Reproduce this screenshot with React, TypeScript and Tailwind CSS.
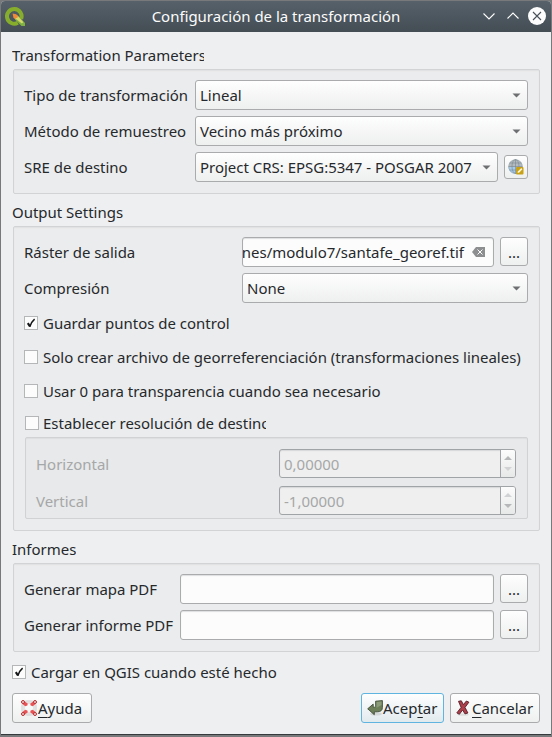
import type { ReactNode } from "react";

function Heading({ children, className }: { children: ReactNode; className: string }) {
  return (
    <div className={`flex items-end ${className}`}>
      <div className="flex h-[27px] items-center overflow-hidden pb-[2px] whitespace-nowrap">{children}</div>
    </div>
  );
}

function Group({ children, className }: { children: ReactNode; className: string }) {
  return (
    <section
      className={`ml-px flex flex-col rounded-[2px] border border-[#d1d3d4] bg-[#ebeced] pt-[10px] pr-[11px] pl-[10px] shadow-[inset_0_1px_1px_#dfe1e2] ${className}`}
    >
      {children}
    </section>
  );
}

function Combo({ value, className }: { value: string; className: string }) {
  return (
    <div
      className={`flex h-[30px] items-center justify-between rounded-[3px] border border-[#a9abac] bg-linear-to-b from-[#fefefe] to-[#eeefef] pr-[6px] pl-[4px] whitespace-nowrap ${className}`}
    >
      <span>{value}</span>
      <svg width="9" height="5" viewBox="0 0 9 5">
        <path d="M.5 .5h8L4.500 4.500z" fill="#6d6f70" />
      </svg>
    </div>
  );
}

function Dots() {
  return (
    <button className="ml-[6px] flex h-[29px] w-[28px] items-center justify-center self-start rounded-[3px] border border-[#a9abac] bg-linear-to-b from-[#fefefe] to-[#eeefef] pt-[1px]">
      ...
    </button>
  );
}

function Check({ label, checked, className = "" }: { label: string; checked?: boolean; className?: string }) {
  return (
    <label className={`flex h-[14px] items-center whitespace-nowrap ${className}`}>
      <span className="mr-[5px] flex h-[14px] w-[14px] shrink-0 items-center justify-center border border-[#b4b6b7] bg-[#fcfcfc]">
        {checked && (
          <svg width="12" height="12" viewBox="0 0 12 12" fill="none" stroke="#141617">
            <path d="M2.8 6.2L5 9.5" strokeWidth="2.2" />
            <path d="M4.8 9.7C5.8 6.5 7.3 4 9.6 2.1" strokeWidth="1.5" />
          </svg>
        )}
      </span>
      <span className="h-[20px] leading-[20px]">{label}</span>
    </label>
  );
}

function Spin({ label, value, atMin }: { label: string; value: string; atMin: boolean }) {
  return (
    <div className="flex h-[29px] items-center text-[#a5a7a8]">
      <span className="w-[243px]">{label}</span>
      <div className="flex h-[29px] w-[237px] overflow-hidden rounded-[3px] border border-[#a1a4a6] bg-[#efefef] shadow-[inset_0_1px_1px_#d6d8d9]">
        <span className="flex flex-1 items-center pl-[4px]">{value}</span>
        <span className="flex w-[15px] flex-col items-center justify-between border-l border-[#a1a4a6] bg-linear-to-b from-[#fcfcfc] to-[#e7e8e8] py-[6px]">
          <svg width="8" height="4" viewBox="0 0 8 4">
            <path d="M0 4h8L4 0z" fill={atMin ? "#b5b7b8" : "#d0d2d3"} />
          </svg>
          <svg width="8" height="4" viewBox="0 0 8 4">
            <path d="M0 0h8L4 4z" fill={atMin ? "#d0d2d3" : "#b5b7b8"} />
          </svg>
        </span>
      </div>
    </div>
  );
}

function Field({ className, children }: { className: string; children?: ReactNode }) {
  return (
    <div
      className={`flex h-[30px] items-center overflow-hidden rounded-[3px] border border-[#a9abac] bg-[#fcfcfc] shadow-[inset_0_1px_1px_#dcdedf] ${className}`}
    >
      {children}
    </div>
  );
}

function QgisLogo() {
  return (
    <svg width="20" height="20" viewBox="0 0 20 20">
      <path
        d="M12.8 15.8A7.3 7.3 0 1 1 16.2 11.8"
        fill="none"
        stroke="#86ad2b"
        strokeWidth="4"
      />
      <path d="M10 9.5h4l6 6.4V19h-3.5L10 12.6z" fill="#7fb241" />
      <path d="M8.5 7.5l4 .9 5.8 6.8-1.4 1.4L9.6 11z" fill="#d7d86b" />
      <path d="M7.6 6.6l3.7.7 2 2.6-3.5 2.2-1.4-1.6z" fill="#f08a38" />
    </svg>
  );
}

function GlobeIcon() {
  return (
    <svg width="16" height="16" viewBox="0 0 16 16">
      <circle cx="7.5" cy="7.5" r="7" fill="#b3bbc0" />
      <path d="M.5 8h14A7 7 0 0 1 .5 8z" fill="#a5cbea" />
      <g fill="none" stroke="#7b878e" strokeWidth=".6">
        <circle cx="7.5" cy="7.5" r="6.8" stroke="#98a4ab" />
        <ellipse cx="7.5" cy="7.5" rx="3.5" ry="7" />
        <path d="M7.5 .5v14M.5 7.5h14M1.5 4h12M1.5 11h12" />
      </g>
      <rect x="8" y="8" width="7.5" height="7.5" rx="1" fill="#c8a117" />
      <path d="M9.5 14l.6-1.8 3.2-3.1 1.1 1.1-3.1 3.2z" fill="#fff8d8" />
    </svg>
  );
}

function HelpIcon() {
  return (
    <svg width="16" height="16" viewBox="0 0 16 16">
      <rect x="2.3" y="2.3" width="11.4" height="11.4" rx="4.5" fill="none" stroke="#e2e2e2" strokeWidth="3.4" />
      <rect x=".8" y=".8" width="14.4" height="14.4" rx="5" fill="none" stroke="#cccece" strokeWidth=".6" />
      <g fill="#ea5254">
        <path d="M1.700 4.200L4.200 1.700 6.800 3.700 6.300 5.600 4.300 6.300z" />
        <path d="M14.300 4.200L11.800 1.700 9.200 3.700l.5 1.900 2 .7z" />
        <path d="M1.700 11.800L4.200 14.300 6.800 12.300l-.5-1.900-2-.7z" />
        <path d="M14.300 11.800L11.800 14.300 9.200 12.300l.5-1.900 2-.7z" />
      </g>
      <g fill="#f6dada" stroke="#b52a2d" strokeWidth="1">
        <circle cx="2" cy="2" r="1.5" />
        <circle cx="14" cy="2" r="1.5" />
        <circle cx="2" cy="14" r="1.5" />
        <circle cx="14" cy="14" r="1.5" />
      </g>
    </svg>
  );
}

function AcceptIcon() {
  return (
    <svg width="16" height="16" viewBox="0 0 16 16">
      <ellipse cx="9" cy="14" rx="6" ry="1.6" fill="#d5d8d8" />
      <path
        d="M8.6 1.2L15.4.6V7.5C15.4 10.5 13.5 11.8 10.2 11.8H7.3V14.7L.7 8.8 6.2 4.1V7.2H7.6C8.5 7.2 8.7 6.8 8.7 6z"
        fill="#6c7f59"
        stroke="#414d36"
        strokeWidth=".9"
      />
      <path d="M9.6 2.1L14.5 1.6V5L9.5 7.7z" fill="#8b9b79" />
    </svg>
  );
}

function CancelIcon() {
  return (
    <svg width="14" height="16" viewBox="0 0 14 16">
      <ellipse cx="7" cy="14.6" rx="6" ry="1.2" fill="#dcdddd" />
      <path
        d="M2.5 1.3L5.3.8 7.4 4.6 10.4 1 12.9 2.2 9 7.4 11.9 13 9 13.9 6.6 10 3.4 14.3.8 12.9 5.1 7.4z"
        fill="#ad3f4b"
        stroke="#561f27"
        strokeWidth=".9"
      />
    </svg>
  );
}

const button =
  "flex h-[30px] items-center rounded-[3px] border bg-linear-to-b from-[#fefefe] whitespace-nowrap";
const key = "underline decoration-1 underline-offset-[3px]";

export default function App() {
  return (
    <div className="h-[737px] w-[552px] overflow-hidden bg-[#77797b] pt-px pr-px pl-px font-['Noto_Sans','Open_Sans',sans-serif] text-[14.98px] leading-[20px] text-[#26292c]">
      <div className="flex h-[734px] flex-col overflow-hidden rounded-t-[4px] border-b border-[#36393b] bg-[#eeeff1]">
        <header className="flex h-[31px] shrink-0 items-center bg-linear-to-b from-[#56616a] to-[#444d54] text-[#fcfcfc]">
          <div className="w-[110px] pl-[4px]">
            <QgisLogo />
          </div>
          <h1 className="flex-1 pb-[2px] text-center whitespace-nowrap">Configuración de la transformación</h1>
          <div className="flex w-[110px] items-center justify-end pr-[5px] pb-px">
            <svg width="64" height="18" viewBox="0 0 64 18" fill="none">
              <path d="M1.5 6.5L7 12l5.5-5.5M25.5 11.5L31 6l5.500 5.500" stroke="#fcfcfc" strokeWidth="1.1" />
              <circle cx="55" cy="9" r="9" fill="#fcfcfc" />
              <path d="M51 5l8 8M59 5l-8 8" stroke="#485159" strokeWidth="1.1" />
            </svg>
          </div>
        </header>

        <main className="flex flex-1 flex-col pr-[11px] pl-[11px]">
          <Heading className="h-[37px] w-[192px]">Transformation Parameters</Heading>
          <Group className="h-[125px] gap-[6px]">
            <div className="flex items-center">
              <span className="w-[171px] whitespace-nowrap">Tipo de transformación</span>
              <Combo value="Lineal" className="flex-1" />
            </div>
            <div className="flex items-center">
              <span className="w-[171px] whitespace-nowrap">Método de remuestreo</span>
              <Combo value="Vecino más próximo" className="flex-1" />
            </div>
            <div className="flex items-center">
              <span className="w-[171px] whitespace-nowrap">SRE de destino</span>
              <Combo value="Project CRS: EPSG:5347 - POSGAR 2007" className="flex-1" />
              <button className="ml-[6px] flex h-[24px] w-[24px] items-center justify-center rounded-[3px] border border-[#a9abac] bg-linear-to-b from-[#fefefe] to-[#eeefef]">
                <GlobeIcon />
              </button>
            </div>
          </Group>

          <Heading className="h-[32px]">Output Settings</Heading>
          <Group className="h-[305px]">
            <div className="flex items-center">
              <span className="w-[218px]">Ráster de salida</span>
              <Field className="w-[252px] justify-end pr-[8px]">
                <span className="whitespace-nowrap">nes/modulo7/santafe_georef.tif</span>
                <svg className="ml-[8px] shrink-0" width="13" height="10" viewBox="0 0 13 10">
                  <path d="M4 0h9v10H4L0 5z" fill="#8c8e8f" />
                  <path d="M5.500 2.500l5 5M10.500 2.500l-5 5" stroke="#fcfcfc" />
                </svg>
              </Field>
              <Dots />
            </div>
            <div className="mt-[6px] flex items-center">
              <span className="w-[218px]">Compresión</span>
              <Combo value="None" className="flex-1" />
            </div>
            <Check className="mt-[13px]" checked label="Guardar puntos de control" />
            <Check className="mt-[20px]" label="Solo crear archivo de georreferenciación (transformaciones lineales)" />
            <Check className="mt-[20px]" label="Usar 0 para transparencia cuando sea necesario" />
            <Check className="mt-[18px] ml-px w-[241px] [&>span:last-child]:overflow-hidden [&>span:first-child]:mr-[4px]" label="Establecer resolución de destino" />
            <div className="mt-[7px] ml-px flex h-[82px] flex-col gap-[8px] rounded-[2px] border border-[#d0d2d3] bg-[#e8e9ea] pt-[11px] pl-[10px] shadow-[inset_0_1px_1px_#dcdedf]">
              <Spin label="Horizontal" value="0,00000" atMin />
              <Spin label="Vertical" value="-1,00000" atMin={false} />
            </div>
          </Group>

          <Heading className="h-[32px]">Informes</Heading>
          <Group className="h-[89px] gap-[6px]">
            <div className="flex items-center">
              <span className="w-[156px] whitespace-nowrap">Generar mapa PDF</span>
              <Field className="flex-1" />
              <Dots />
            </div>
            <div className="flex items-center">
              <span className="w-[156px] whitespace-nowrap">Generar informe PDF</span>
              <Field className="flex-1" />
              <Dots />
            </div>
          </Group>

          <Check className="mt-[13px]" checked label="Cargar en QGIS cuando esté hecho" />
          <footer className="mt-[14px] flex gap-[6px]">
            <button className={`${button} mr-auto w-[80px] border-[#a9abac] to-[#eeefef] pl-[8px]`}>
              <HelpIcon />
              <span className="ml-[1px]"><span className={key}>A</span>yuda</span>
            </button>
            <button className={`${button} w-[83px] border-[#5fb4e0] to-[#e2eaee] pl-[5px]`}>
              <AcceptIcon />
              <span>Acep<span className={key}>t</span>ar</span>
            </button>
            <button className={`${button} w-[90px] border-[#a9abac] to-[#eeefef] pl-[5px]`}>
              <CancelIcon />
              <span className="ml-[2px]"><span className={key}>C</span>ancelar</span>
            </button>
          </footer>
        </main>
      </div>
    </div>
  );
}
